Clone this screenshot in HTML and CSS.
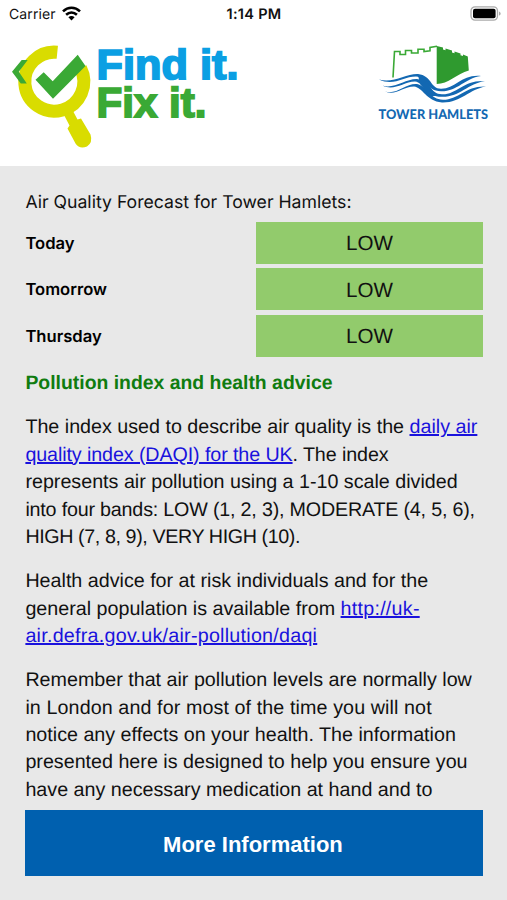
FILE: index.html
```html
<!DOCTYPE html>
<html lang="en">
<head>
<meta charset="utf-8">
<meta name="viewport" content="width=device-width, initial-scale=1">
<title>Air Quality Forecast</title>
<link rel="stylesheet" href="styles.css">
</head>
<body>
<div class="status">
  <div class="carrier"><span>Carrier</span>
    <svg class="wifi" width="19" height="15" viewBox="0 0 19 15"><g fill="none" stroke="#000" stroke-width="2.6"><path d="M1 5.4C6 .6 13 .6 18 5.4"/><path d="M4.1 8.8c3.2-2.9 7.6-2.9 10.8 0"/></g><path d="M6.4 11.2c1.8-1.6 4.4-1.6 6.2 0L9.5 14.4z"/></svg>
  </div>
  <div class="time">1:14 PM</div>
  <svg class="battery" width="32" height="15" viewBox="0 0 32 15"><rect x="1" y=".9" width="26.5" height="13.2" rx="4" fill="#fff" stroke="#aaa" stroke-width="1.3"/><rect x="3" y="2.8" width="22.6" height="9.4" rx="2"/><path d="M29 5.4c2.2.8 2.2 3.4 0 4.2z" fill="#aaa"/></svg>
</div>
<header class="header">
  <svg class="findit" width="240" height="116" viewBox="10 36 240 116">
    <path d="M57.3 52.3A29.5 29.5 0 1 0 80.6 68.3" fill="none" stroke="#d9dc00" stroke-width="13"/>
    <path d="M64 115L73 111 77.500 119.500 81 118.500 90.500 134.500Q93 142.500 87 146.500Q79.500 149.500 75.500 143.500L67.500 128.500 69.500 125.500z" fill="#d9dc00"/>
    <path d="M27.700 60H21.700L12 71.700 20.800 83.500H26.800L18.800 71.700z" fill="#3aa935"/>
    <path d="M35.500 79.800L43.700 72.300 52.700 81.300 77.700 54.700 85.500 66 53 98.800z" fill="#3aa935"/>
    <text class="word" x="96.500" y="78.500" textLength="142" lengthAdjust="spacingAndGlyphs" fill="#0b9fe3" stroke="#0b9fe3">Find it.</text>
    <text class="word" x="96.500" y="117.300" textLength="110" lengthAdjust="spacingAndGlyphs" fill="#3aa935" stroke="#3aa935">Fix it.</text>
  </svg>
  <svg class="council" width="114" height="84" viewBox="376 44 114 84">
    <path d="M393 77.500L394.500 51.500H400V54.500H405.500V50.500H411.500V53H418V49.300H424V51.500L430 50.800V47.500L437 46.300" fill="none" stroke="#3aa935" stroke-width="1.600"/>
    <path d="M436.700 46L443 47.500V49.600L445.500 50.300V48.500L452 50.500V52.500L454.500 53.200V51.400L460.500 53.400V55.300L463 56.100V54.500L467.800 56.500 468.800 70.500C457 74 448 84 436.700 84z" fill="#2f9a2f"/>
    <g fill="#1368b2">
      <path d="M379 79.500C393 84 406 73.500 418 74C432 75.500 430 88.500 441 88.800C455 89 462 74 481 76C464 78.500 458 91.500 441 91.300C426 91 427 77.500 416 76.500C403 76.500 394 86.500 379 79.500z"/>
      <path d="M382.500 85.500C394 89.500 406 78.500 417 79C430 81 430 94 442 94.300C456 95 464 79.500 485 81C468 83.500 460 97 442 96.800C426 97 424 82.500 415 81.500C403 82 394 91.500 382.500 85.500z"/>
      <path d="M385 91.500C397 95 406 83 417 84C427 86 430 99.500 443 99.800C458 100 466 85.500 486 86.500C469 89 461 103 442 102.500C426 101 423 87.500 414 86.500C403 86.500 396 96 385 91.500z"/>
      <path d="M418 75Q425 76 429 85L436 96 430 96 420 84z"/>
    </g>
    <text class="town" x="378.500" y="119" textLength="109.500" lengthAdjust="spacingAndGlyphs">TOWER HAMLETS</text>
  </svg>
</header>
<main class="content">
  <h1 class="title">Air Quality Forecast for Tower Hamlets:</h1>
  <div class="forecast">
    <div class="day">Today</div><div class="level">LOW</div>
    <div class="day">Tomorrow</div><div class="level">LOW</div>
    <div class="day">Thursday</div><div class="level">LOW</div>
  </div>
  <div class="advice">
    <h2>Pollution index and health advice</h2>
    <p>The index used to describe air quality is the <a href="#">daily air<br><span class="snug">quality index (DAQI) for the UK</span></a><span class="snug">. The index</span><br>represents air pollution using a 1-10 scale divided<br><span class="bands">into four bands: LOW (1, 2, 3), MODERATE (4, 5, 6),</span><br><span class="tight">HIGH (7, 8, 9), VERY HIGH (10).</span></p>
    <p>Health advice for at risk individuals and for the<br>general population is available from <a class="url" href="#">http://uk-<br>air.defra.gov.uk/air-pollution/daqi</a></p>
    <p>Remember that air pollution levels are normally low<br><span class="loose">in London and for most of the time you will not</span><br>notice any effects on your health. The information<br>presented here is designed to help you ensure you<br>have any necessary medication at hand and to</p>
  </div>
  <button class="more">More Information</button>
</main>
</body>
</html>
```
FILE: styles.css
```css
* { box-sizing: border-box; }
body {
  margin: 0;
  height: 900px;
  display: flex;
  flex-direction: column;
  overflow: hidden;
  background: #fff;
  color: #111;
  font-family: "Liberation Sans", Arial, sans-serif;
  text-rendering: geometricPrecision;
}
.status {
  height: 28px;
  padding: 0 5px 0 9px;
  display: grid;
  grid-template-columns: 1fr auto 1fr;
  align-items: center;
  font: 14px/28px Inter, sans-serif;
}
.carrier { display: flex; align-items: center; gap: 6px; letter-spacing: 0.1px; }
.carrier span { padding-top: 1px; }
.wifi { margin-top: -3px; }
.time { padding-top: 1px; font-weight: 600; font-size: 14.500px; letter-spacing: 0.3px; margin-left: -3px; }
.battery { justify-self: end; margin-top: -2px; }
.header {
  height: 138px;
  padding: 8px 17px 0 10px;
  display: flex;
  justify-content: space-between;
  align-items: flex-start;
}
.findit, .council { overflow: visible; }
.council { margin-top: 8px; }
.word { font: 700 42px "Liberation Sans", Arial, sans-serif; stroke-width: 1.800px; }
.town { font: 900 13.300px Lato, sans-serif; fill: #1368b2; }
.content {
  flex: 1;
  display: flex;
  flex-direction: column;
  padding: 20px 24.500px 24.500px 25.400px;
  background: #e8e8e8;
}
.title {
  margin: 0;
  height: 36px;
  padding-top: 1px;
  font: 400 17.650px/31px Inter, sans-serif;
}
.forecast {
  display: grid;
  grid-template-columns: 230.900px 1fr;
  grid-auto-rows: 41.800px;
  row-gap: 4.600px;
}
.day {
  display: flex;
  align-items: center;
  padding-top: 2px;
  color: #000;
  font: 600 16.600px Inter, sans-serif;
}
.level {
  display: flex;
  align-items: center;
  justify-content: center;
  padding-top: 3px;
  background: #92cb6c;
  font-size: 20.600px;
}
.advice {
  height: 453px;
  white-space: nowrap;
  font-size: 19.700px;
  line-height: 27.400px;
}
.advice h2 {
  margin: 13.500px 0 17px;
  color: #107c10;
  font-size: 19.400px;
  line-height: 27.400px;
}
.advice p { margin: 0 0 16.800px; }
.advice a { color: #1a12dd; text-decoration-thickness: 1.500px; }
.snug { letter-spacing: -0.100px; }
.bands { letter-spacing: -0.190px; }
.tight { letter-spacing: -0.400px; }
.loose { letter-spacing: 0.100px; }
.advice .url { letter-spacing: 0.250px; }
.more {
  height: 66px;
  padding: 4px 2px 0 0;
  border: 0;
  background: #0060af;
  color: #fff;
  font: 700 22px "Liberation Sans", Arial, sans-serif;
}
```
